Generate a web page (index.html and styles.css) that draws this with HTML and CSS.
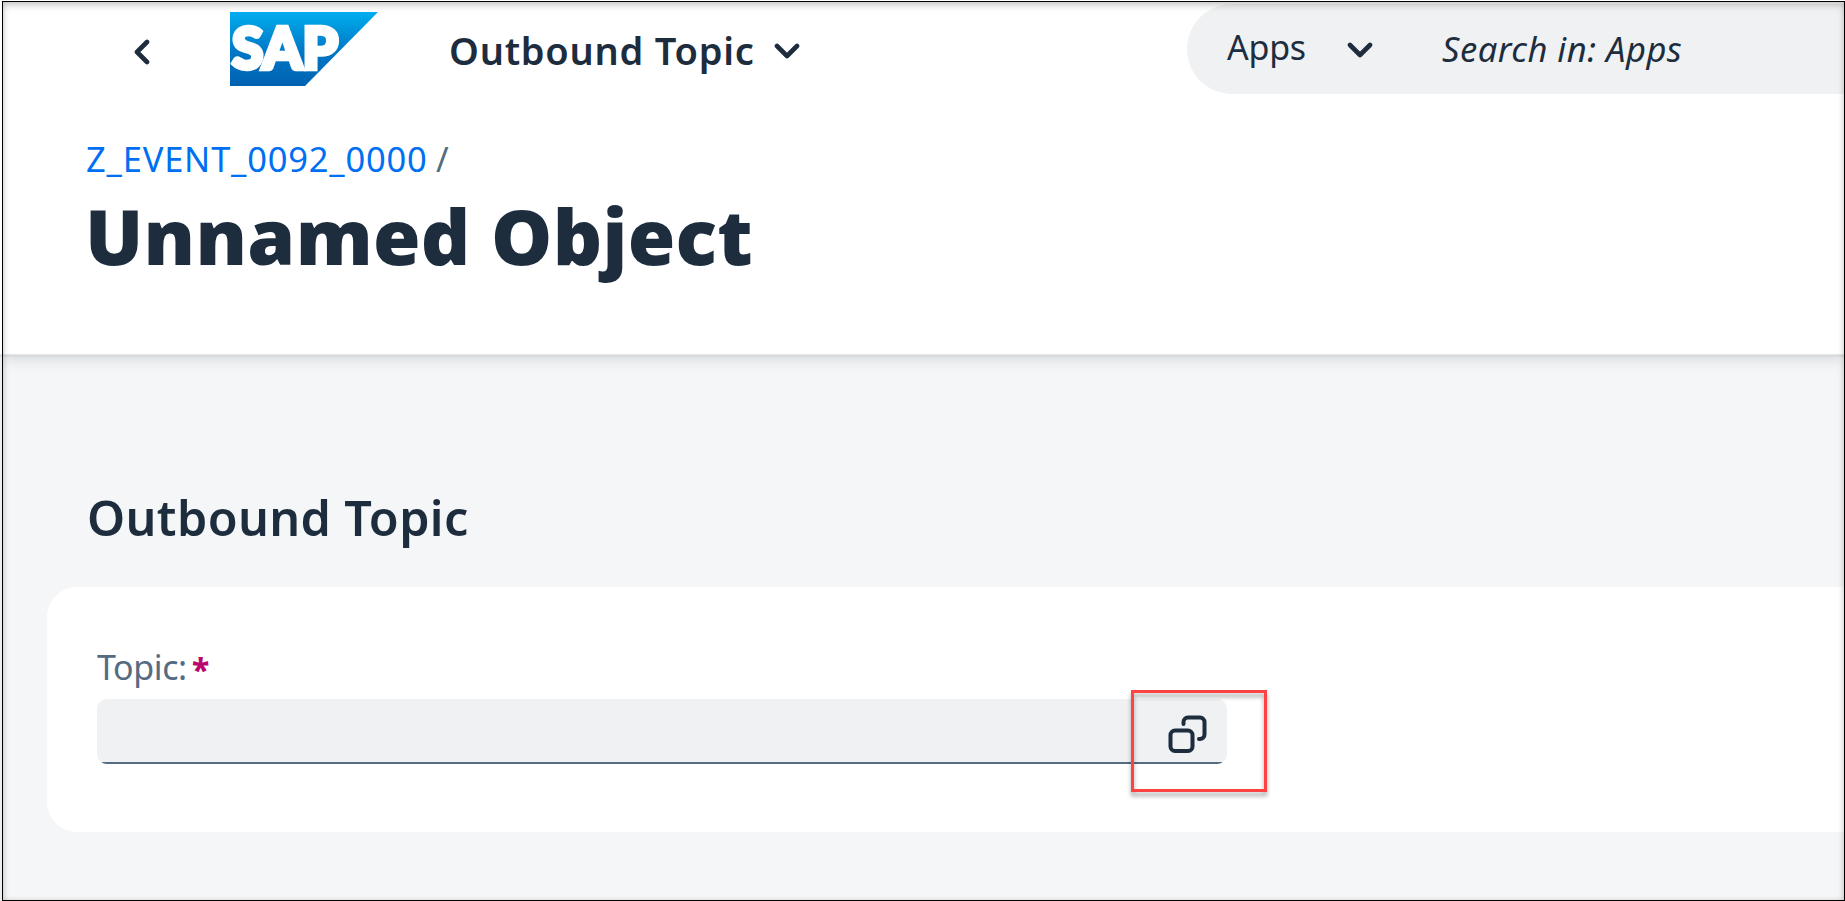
FILE: index.html
```html
<!DOCTYPE html>
<html lang="en">
<head>
<meta charset="utf-8">
<title>Outbound Topic</title>
<link rel="stylesheet" href="styles.css">
</head>
<body>
<div class="app">
  <header class="page-header">
    <div class="shell">
      <svg class="back" viewBox="0 0 16 26"><path d="M13 3 3 13l10 10"/></svg>
      <svg class="logo" viewBox="0 0 148 74">
        <defs><linearGradient id="blue" x1="0" y1="0" x2="0" y2="1"><stop offset="0" stop-color="#00aeef"/><stop offset=".22" stop-color="#0097dc"/><stop offset=".55" stop-color="#0076c5"/><stop offset="1" stop-color="#0062b1"/></linearGradient></defs>
        <path fill="url(#blue)" d="M0 0h148L75 74H0z"/>
        <text x="2" y="57" textLength="106" lengthAdjust="spacing">SAP</text>
      </svg>
      <span class="app-title">Outbound Topic</span>
      <svg class="chevron title-chevron" viewBox="0 0 26 17"><path d="M3 3l10 10L23 3"/></svg>
      <div class="search">
        <span class="scope">Apps</span>
        <svg class="chevron" viewBox="0 0 26 17"><path d="M3 3l10 10L23 3"/></svg>
        <span class="placeholder">Search in: Apps</span>
      </div>
    </div>
    <nav class="crumbs"><a class="crumb">Z_EVENT_0092_0000</a><span class="slash">/</span></nav>
    <h1 class="object-title">Unnamed Object</h1>
  </header>
  <main class="content">
    <h2 class="section-title">Outbound Topic</h2>
    <section class="card">
      <label class="label"><span class="label-text">Topic:</span><span class="required">*</span></label>
      <div class="field">
        <svg class="value-help" viewBox="0 0 40 40"><rect x="2.500" y="15.500" width="22" height="20.500" rx="4.500"/><path d="M15.500 9V7.500a4.500 4.500 0 0 1 4.500-5h12a4.500 4.500 0 0 1 4.500 4.500v12.500a4.500 4.500 0 0 1-4.500 4.500h-1"/></svg>
        <div class="highlight"></div>
      </div>
    </section>
  </main>
</div>
</body>
</html>
```
FILE: styles.css
```css
* { box-sizing: border-box; }
body { margin: 0; padding: 1px 0 0 2px; background: linear-gradient(#fff 354px, #dcdedf 354px, #dcdedf 357px, #edeeef 357px) no-repeat 0 0 / 2px 901px #fff; font-family: "Noto Sans", sans-serif; color: #1d2d3e; }
.app { position: relative; width: 1843px; height: 900px; border: 1px solid #000; background: #f5f6f7; overflow: hidden; }
.app::after { content: ""; position: absolute; inset: 0; box-shadow: inset 0 4px 7px rgba(0,0,0,.17), inset 0 0 5px rgba(0,0,0,.12); pointer-events: none; }
.page-header { position: relative; height: 355px; background: linear-gradient(#e6e7e7, #e6e7e7) no-repeat bottom / 100% 1px #fff; border-bottom: 2px solid #d9dbdc; box-shadow: 0 2px 13px rgba(29,45,62,.15); }
.shell { display: flex; align-items: flex-start; height: 93px; padding: 2px 0 0 131px; }
.back { width: 16px; height: 26px; margin-top: 35px; }
.logo { width: 148px; height: 74px; margin: 8px 0 0 80px; }
.logo text { fill: #fff; stroke: #fff; stroke-width: 4.500px; font: 900 56.500px Lato, sans-serif; }
.back path, .chevron path { fill: none; stroke: #1d2d3e; stroke-width: 4.600px; stroke-linecap: round; stroke-linejoin: round; }
.app-title { width: 304px; margin: 21px 0 0 71px; font-size: 38px; line-height: 50px; font-weight: 600; letter-spacing: .750px; white-space: nowrap; }
.chevron { width: 26px; height: 17px; }
.title-chevron { margin: 39px 0 0 21px; }
.search { display: flex; width: 657px; height: 90px; margin-left: auto; padding-left: 40px; background: #eff1f2; border-radius: 45px 0 0 45px; }
.scope { width: 78px; margin-top: 18px; font-size: 34px; line-height: 50px; letter-spacing: -.250px; }
.search .chevron { margin: 38px 0 0 42px; }
.placeholder { margin: 20px 0 0 69px; font-size: 34.500px; line-height: 50px; font-style: italic; letter-spacing: .500px; white-space: nowrap; }
.crumbs { display: flex; height: 50px; margin: 39px 0 0 83px; font-size: 34px; line-height: 50px; color: #556b82; }
.crumb { width: 350px; color: #0070f2; font-size: 34.500px; letter-spacing: .800px; white-space: nowrap; }
.object-title { margin: -1px 0 0 82px; font-size: 77px; line-height: 106px; font-weight: 900; letter-spacing: .300px; white-space: nowrap; }
.section-title { margin: 125px 0 0 84px; font-size: 48.500px; line-height: 70px; font-weight: 600; letter-spacing: .370px; white-space: nowrap; }
.card { height: 245px; margin: 35px 0 0 44px; padding: 55px 0 0 50px; background: #fff; border-radius: 30px 0 0 30px; }
.label { display: flex; height: 50px; font-size: 34px; line-height: 50px; color: #556b82; }
.label-text { width: 95px; letter-spacing: -.400px; }
.required { color: #ba066c; font-size: 32px; line-height: 54px; font-weight: 800; }
.field { position: relative; width: 1130px; height: 65px; margin-top: 7px; padding: 15.500px 0 0 1070.500px; background: #eff1f2; border-radius: 10px; background-image: linear-gradient(#556b82, #556b82); background-size: 100% 2px; background-position: bottom; background-repeat: no-repeat; }
.value-help { display: block; width: 40px; height: 40px; }
.value-help * { fill: none; stroke: #1d2d3e; stroke-width: 4px; stroke-linecap: round; stroke-linejoin: round; }
.highlight { position: absolute; left: 1034px; top: -9px; width: 136px; height: 102px; border: 3px solid #ff4343; filter: drop-shadow(0 4px 2px rgba(0,0,0,.35)); }
```
